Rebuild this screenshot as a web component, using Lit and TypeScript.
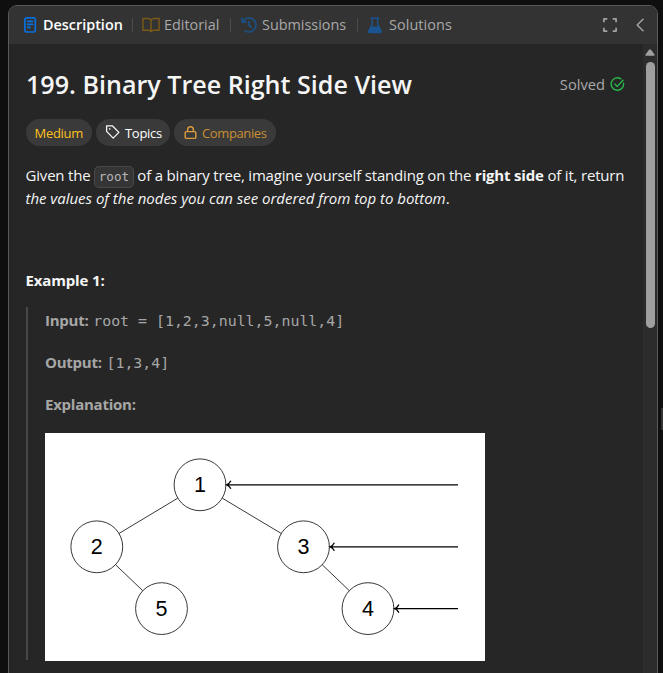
import { LitElement, html, svg, css } from "lit";
import { customElement } from "lit/decorators.js";

interface TreeNode { label: string; x: number; y: number }

const NODES: TreeNode[] = [
  { label: "1", x: 155, y: 51.8 },
  { label: "2", x: 51.8, y: 113.8 },
  { label: "3", x: 258.5, y: 113.8 },
  { label: "5", x: 116.5, y: 175.6 },
  { label: "4", x: 323, y: 175.6 },
];
const EDGES = [[0, 1], [0, 2], [1, 3], [2, 4]];
const SEEN = [0, 2, 4];
const RADIUS = 25.9;

@customElement("right-view-tree")
export class RightViewTree extends LitElement {
  static styles = css`
    :host { display: block; width: 440px; height: 228px; background: #fff; }
    svg { display: block; }
    .edge, .node { fill: none; stroke: #222; stroke-width: 0.9; }
    .arrow { fill: none; stroke: #000; stroke-width: 1.3; }
    .label { font: 21.5px "Liberation Sans", Arial, sans-serif; fill: #000; text-anchor: middle; }
  `;

  private edge(from: TreeNode, to: TreeNode) {
    const dx = to.x - from.x, dy = to.y - from.y;
    const length = Math.hypot(dx, dy);
    const ux = (dx / length) * RADIUS, uy = (dy / length) * RADIUS;
    return svg`<line class="edge" x1=${from.x + ux} y1=${from.y + uy} x2=${to.x - ux} y2=${to.y - uy}></line>`;
  }

  private arrow(n: TreeNode) {
    const x = n.x + RADIUS + 0.8;
    return svg`<path class="arrow" d="M413 ${n.y}H${x}M${x + 4.2} ${n.y - 4}Q${x + 2.5} ${n.y - 0.8} ${x} ${n.y}Q${x + 2.5} ${n.y + 0.8} ${x + 4.2} ${n.y + 4}"></path>`;
  }

  render() {
    return html`<svg width="440" height="228" viewBox="0 0 440 228">
      ${EDGES.map(([a, b]) => this.edge(NODES[a], NODES[b]))}
      ${NODES.map((n) => svg`<circle class="node" cx=${n.x} cy=${n.y} r=${RADIUS}></circle>
        <text class="label" x=${n.x} y=${n.y + 7.5}>${n.label}</text>`)}
      ${SEEN.map((i) => this.arrow(NODES[i]))}
    </svg>`;
  }
}

@customElement("app-root")
export class AppRoot extends LitElement {
  static styles = css`
    :host {
      display: block; position: relative; box-sizing: border-box; height: 673px; overflow: hidden;
      padding: 5px 5px 0 8px; background: #0f0f0f; color: #f5f5f5;
      font-family: "Open Sans", "Noto Sans", sans-serif; font-size: 15px;
    }
    svg { display: block; flex: none; }
    .panel {
      box-sizing: border-box; height: 690px; border: 1px solid #5a5a5a; border-radius: 9px;
      background: #262626; overflow: hidden; display: flex; flex-direction: column;
    }
    .tabs {
      flex: none; height: 38px; background: #333; display: flex; align-items: center;
      color: #a9a9a9; font-size: 14.4px; padding-left: 14px;
    }
    .tab { display: flex; align-items: center; white-space: nowrap; }
    .tab span { line-height: 20px; }
    .description { width: 109px; gap: 6px; color: #fff; font-weight: 600; }
    .editorial { width: 88px; gap: 4px; }
    .submissions { width: 117px; gap: 4px; }
    .solutions { gap: 6px; letter-spacing: 0.08px; }
    .divider { width: 1px; height: 14px; background: #4c4c4c; margin-right: 9px; }
    .tools { margin-left: auto; display: flex; align-items: center; gap: 17px; padding-right: 12px; color: #a3a3a3; }
    .body { flex: 1; min-height: 0; display: flex; }
    .content { flex: 1; min-width: 0; padding: 23px 0 0 17px; }
    .head { display: flex; justify-content: space-between; align-items: center; height: 34px; padding-right: 18px; }
    h1 { margin: 0; font-size: 25.1px; line-height: 34px; font-weight: 600; white-space: nowrap; }
    .solved { display: flex; align-items: center; gap: 5px; color: #a9a9a9; font-size: 14.7px; }
    .chips { display: flex; gap: 4px; margin-top: 18px; }
    .chip {
      box-sizing: border-box; height: 27px; border-radius: 14px; background: #3a3a3a;
      display: flex; align-items: center; font-size: 13px; white-space: nowrap;
    }
    .medium { width: 66px; padding-left: 8.5px; color: #ffc01e; letter-spacing: -0.3px; }
    .topics { width: 74px; padding-left: 9px; gap: 5px; color: #fff; letter-spacing: -0.3px; }
    .companies { width: 102px; padding-left: 10px; gap: 5px; color: #c98f34; letter-spacing: -0.38px; }
    p { margin: 0; line-height: 23px; white-space: nowrap; letter-spacing: -0.24px; }
    .intro { margin-top: 18px; margin-left: -0.5px; letter-spacing: -0.185px; }
    em { letter-spacing: -0.02px; }
    code, .mono { font-family: "DejaVu Sans Mono", monospace; letter-spacing: 0; }
    code {
      padding: 2px 3.5px 3px; border: 1px solid #484848; border-radius: 5px;
      background: #353535; color: #b5b5b5; font-size: 12.6px; line-height: 1;
    }
    .example { margin-top: 59px; margin-left: -0.5px; font-weight: 700; letter-spacing: -0.15px; }
    .quote {
      margin-top: 15px; border-left: 2px solid #484848; padding-left: 17px; height: 353px;
      box-sizing: border-box; color: #a6a6a6;
    }
    .quote p { height: 42px; line-height: 26px; }
    .mono { font-size: 14.9px; margin-left: 1px; }
    .scrollbar {
      flex: none; width: 14px; background: #2c2c2c; display: flex; flex-direction: column;
      align-items: center; padding-top: 5px; box-sizing: border-box;
    }
    .thumb { width: 9px; height: 266px; margin-top: 6px; border-radius: 5px; background: #9f9f9f; }
    .handle { position: absolute; right: 0; top: 408px; width: 2px; height: 22px; background: #333; }
  `;

  render() {
    return html`
      <div class="panel">
        <div class="tabs">
          <div class="tab description">
            <svg width="14" height="18" viewBox="0 0 14 18" fill="none" stroke="#0a6fdd" stroke-width="1.7" stroke-linecap="round">
              <rect x="1.9" y="1.8" width="10.4" height="14.2" rx="1.6"></rect>
              <path d="M4.7 5.3h4.8M4.7 8.4h4.8M4.7 11.4h2.3"></path>
            </svg>
            <span>Description</span>
          </div>
          <i class="divider"></i>
          <div class="tab editorial">
            <svg width="18" height="16" viewBox="0 0 18 16" fill="none" stroke="#7d5b17" stroke-width="1.4" stroke-linejoin="round">
              <path d="M9 3.2Q7.8 1.5 5.8 1.5H.9V13.2H6.2Q8.3 13.2 9 14.7Q9.7 13.2 11.8 13.2H17.1V1.5H12.2Q10.2 1.5 9 3.2V14.5"></path>
            </svg>
            <span>Editorial</span>
          </div>
          <i class="divider"></i>
          <div class="tab submissions">
            <svg width="18" height="18" viewBox="0 0 18 18" fill="none" stroke="#1b5289" stroke-width="1.6" stroke-linecap="round" stroke-linejoin="round">
              <path d="M2.6 6A7 7 0 1 1 5.2 14.9M2 2.2L2.3 6.2L6.2 5.9M9 5.5V9.2L11.3 11.4"></path>
            </svg>
            <span>Submissions</span>
          </div>
          <i class="divider"></i>
          <div class="tab solutions">
            <svg width="16" height="17" viewBox="0 0 16 17" fill="#1b5591">
              <path d="M3.4.6H12.4V1.9H11.3V7.2L14.6 13.3Q15.7 15.9 13.4 16.2H2.5Q.2 15.9 1.3 13.3L4.6 7.2V1.9H3.4ZM6 1.9V7.6L4.9 9.6H11L9.9 7.6V1.9Z" fill-rule="evenodd"></path>
            </svg>
            <span>Solutions</span>
          </div>
          <div class="tools">
            <svg width="16" height="16" viewBox="0 0 16 16" fill="none" stroke="currentColor" stroke-width="1.7" stroke-linejoin="round">
              <path d="M1.9 5.3V1.9H5.3M10.7 1.9H14.1V5.3M14.1 10.7V14.1H10.7M5.3 14.1H1.9V10.7"></path>
            </svg>
            <svg width="10" height="16" viewBox="0 0 10 16" fill="none" stroke="currentColor" stroke-width="1.5" stroke-linecap="round" stroke-linejoin="round">
              <path d="M8 2.2L2.2 8L8 13.8"></path>
            </svg>
          </div>
        </div>
        <div class="body">
          <div class="content">
            <div class="head">
              <h1>199. Binary Tree Right Side View</h1>
              <div class="solved">
                <span>Solved</span>
                <svg width="15" height="15" viewBox="0 0 15 15" fill="none" stroke="#28b84a" stroke-width="1.4" stroke-linecap="round" stroke-linejoin="round">
                  <path d="M10.7 1.8A6.2 6.2 0 1 0 13.5 6.1M4.9 7.1L7.3 9.4L13 3.2"></path>
                </svg>
              </div>
            </div>
            <div class="chips">
              <div class="chip medium"><span>Medium</span></div>
              <div class="chip topics">
                <svg width="15" height="15" viewBox="0 0 15 15" fill="none" stroke="#f5f5f5" stroke-width="1.3" stroke-linejoin="round">
                  <path d="M1.6 .8H7.3L13.9 7.4L8.2 13.1L1.6 6.4Z"></path>
                  <circle cx="4.7" cy="3.9" r=".8" fill="#f5f5f5" stroke="none"></circle>
                </svg>
                <span>Topics</span>
              </div>
              <div class="chip companies">
                <svg width="13" height="14" viewBox="0 0 13 14" fill="none" stroke="#dc9c3d" stroke-width="1.4" stroke-linejoin="round">
                  <rect x="1.2" y="5.6" width="10.6" height="6.8" rx="1"></rect>
                  <path d="M3.6 5.6V3.6Q3.6.8 6.5.8T9.4 3.6V5.6"></path>
                </svg>
                <span>Companies</span>
              </div>
            </div>
            <p class="intro">Given the <code>root</code> of a binary tree, imagine yourself standing on the <b>right side</b> of it, return<br><em>the values of the nodes you can see ordered from top to bottom</em>.</p>
            <p class="example">Example 1:</p>
            <div class="quote">
              <p><b>Input:</b> <span class="mono">root = [1,2,3,null,5,null,4]</span></p>
              <p><b>Output:</b> <span class="mono">[1,3,4]</span></p>
              <p><b>Explanation:</b></p>
              <right-view-tree></right-view-tree>
            </div>
          </div>
          <div class="scrollbar">
            <svg width="10" height="7" viewBox="0 0 10 7" fill="#9f9f9f"><path d="M4 .8Q5 -.4 6 .8L9.5 5.5Q9.9 6.6 9 6.8H1Q.1 6.6.5 5.5Z"></path></svg>
            <div class="thumb"></div>
          </div>
        </div>
      </div>
      <i class="handle"></i>
    `;
  }
}
